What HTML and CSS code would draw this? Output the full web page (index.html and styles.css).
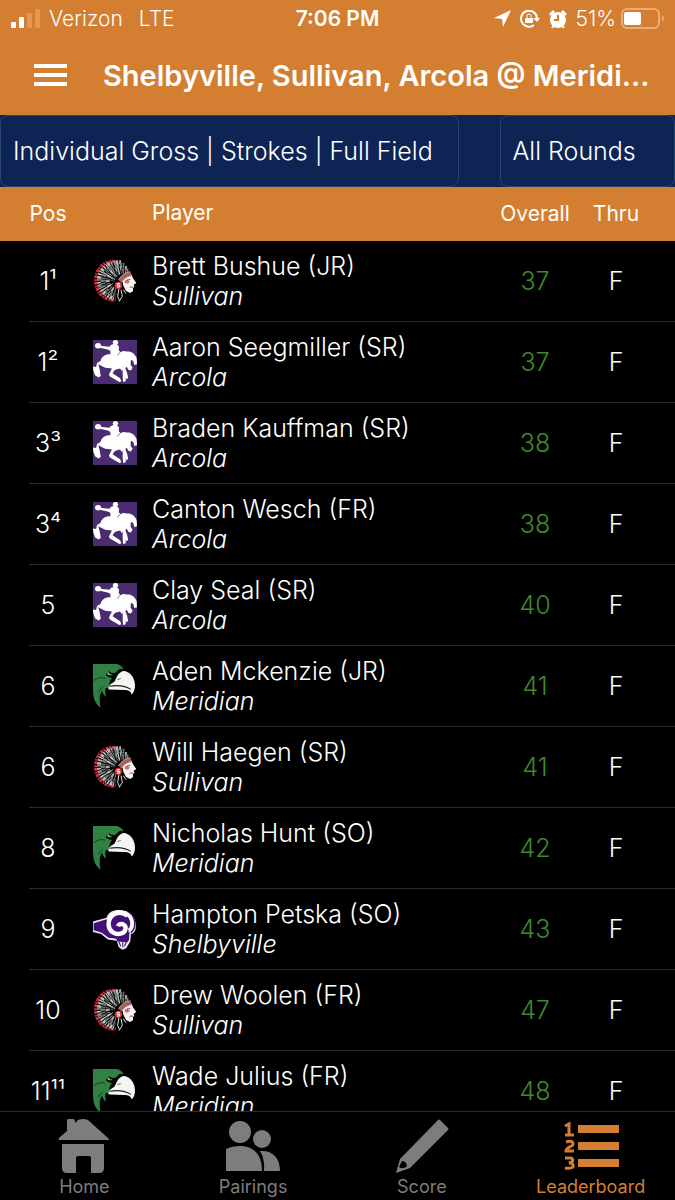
FILE: index.html
```html
<!DOCTYPE html>
<html lang="en">
<head>
    <meta charset="UTF-8">
    <meta name="viewport" content="width=device-width, initial-scale=1.0">
    <title>Leaderboard</title>
    <link rel="stylesheet" href="styles.css">
</head>

<body>
<!-- TEAM LOGOS -->
<svg class="sprites" aria-hidden="true">
    <symbol id="sullivan" viewBox="26 24 132 132">
        <g fill="none">
            <path d="M92 32 C58 28 34 56 34 88 C34 122 56 146 92 148" stroke="#c5303a" stroke-width="10" stroke-dasharray="9 3 5 2"/>
            <path d="M110 34 C72 32 46 54 44 86 C43 112 62 136 94 144" stroke="#b9bfbc" stroke-width="12" stroke-dasharray="5 3 8 2 3 4"/>
            <path d="M120 42 C82 38 58 60 56 88 C56 110 70 126 94 132" stroke="#747b79" stroke-width="13" stroke-dasharray="4 2 7 3"/>
            <path d="M128 52 C94 48 72 66 70 88 C70 104 80 114 94 118" stroke="#a7adaa" stroke-width="13" stroke-dasharray="6 4 3 2"/>
            <path d="M132 60 C106 58 88 70 84 92" stroke="#747b79" stroke-width="14" stroke-dasharray="5 2 3 3"/>
            <path d="M52 48l44 34M38 72l54 18M42 106l48-10M60 132l34-32M82 32l20 44M116 38l-8 34M90 148l14-38" stroke="#111" stroke-width="2"/>
            <path d="M64 40l30 36M46 60l40 22M48 120l38-22M98 36l8 34" stroke="#e8eae8" stroke-width="2"/>
        </g>
        <path d="M112 78L141 70L146 82L156 96L148 101L150 107L146 111L146 121L137 126L125 120L117 104Z" fill="#f5f3f0"/>
        <path d="M102 86Q118 64 138 62L143 74Q123 78 111 94Z" fill="#a5625c"/>
        <path d="M102 86Q118 64 138 62M111 94Q123 78 143 74" fill="none" stroke="#ddd" stroke-width="2"/>
        <path d="M121 88l9-2 7 6-7 6-9-2z" fill="#dc6b70"/>
        <path d="M128 87l10-2M136 109l10-1" stroke="#222" stroke-width="2"/>
        <path d="M104 112l-4 24 6 14M110 116l4 20-10 16M117 116l8 12" fill="none" stroke="#ddd" stroke-width="3"/>
        <circle cx="102" cy="103" r="11" fill="#d6333e"/>
        <path d="M107 98h-8v5h7v5h-8" fill="none" stroke="#fff" stroke-width="3"/>
    </symbol>
    <symbol id="arcola" viewBox="0 0 130 130">
        <path d="M0 0h130v130H0z" fill="#4b2c70"/>
        <g fill="#fff">
            <ellipse cx="15" cy="17" rx="9" ry="8"/>
            <path d="M20 17L48 20L54 14L61 12L58 8L61 1L71 0L75 8L71 13L77 18L76 30L83 38L78 48L52 48L51 32L43 28L20 23Z"/>
            <path d="M22 62C26 48 36 41 52 42L74 44C80 34 90 30 99 34C112 32 124 40 129 54L130 72L122 74L119 62L112 58L111 73L117 82L112 90L104 88L100 79L94 84L97 122L89 124L86 92L80 84L66 88L58 98L80 113L84 122L78 124L50 108L47 102L56 84L36 82L24 76L16 72L20 88L23 106L16 111L6 104L1 90L0 78L9 80L12 68Z"/>
            <path d="M78 76L92 74L101 98L104 112L98 116Z"/>
        </g>
        <path d="M61 92l12-5 5 22-17-10z" fill="#4b2c70"/>
        <path d="M76 14l5 18M80 36l-8 10M88 88l-3 22" stroke="#4b2c70" stroke-width="2"/>
    </symbol>
    <symbol id="meridian" viewBox="0 0 130 130">
        <path d="M0 0H70C80 2 86 8 90 14L76 22L58 38L50 52L46 68L44 72L38 70L36 80L38 98L29 86L26 78L20 94L20 112L22 129C10 120 2 106 1 90L0 70Z" fill="#318044"/>
        <path d="M2 50C12 41 24 38 36 42M28 68Q20 74 16 84" fill="none" stroke="#0c2413" stroke-width="2"/>
        <path d="M46 20Q54 29 66 26L80 13L90 18L78 34L62 42L48 40L38 34L40 27L54 34L58 30L48 27Z" fill="#050706"/>
        <path d="M42 26l8 4 2 4-8-2z" fill="#a5c767"/>
        <path d="M90 21C108 22 122 38 124 60C125 74 121 84 114 90C112 80 104 77 92 77L46 75C44 67 48 61 54 58L64 52C70 38 76 24 90 21Z" fill="#f4f4f2"/>
        <path d="M48 66C76 61 98 66 112 75" fill="none" stroke="#222" stroke-width="3"/>
        <path d="M72 46l10-3" stroke="#222" stroke-width="2"/>
    </symbol>
    <symbol id="shelbyville" viewBox="0 0 130 130">
        <path d="M0 43L40 32C46 12 66 6 90 10C116 14 130 38 126 64C124 74 118 78 112 80L110 102L98 122L86 126L76 118L70 100L44 96L24 80L0 74Z" fill="#f0ebf5"/>
        <path d="M2 48L40 36L50 78L68 90L70 94L46 91L26 76L2 69Z" fill="#43107a"/>
        <circle cx="78" cy="52" r="34" fill="#43107a"/>
        <path d="M48 78L108 74L106 98L102 104L72 102L68 92Z" fill="#43107a"/>
        <path d="M100 14C128 26 128 62 112 76" fill="none" stroke="#43107a" stroke-width="5"/>
        <path d="M114 34l8 -4M118 48h8M116 62l7 3" stroke="#43107a" stroke-width="2"/>
        <path d="M102 26C78 6 46 22 46 52C47 72 66 83 82 79C97 75 101 58 90 52C84 48 76 51 74 57" fill="none" stroke="#fff" stroke-width="13"/>
        <path d="M94 18C118 26 122 58 106 70" fill="none" stroke="#fff" stroke-width="11"/>
        <path d="M76 102l6 14M88 102v18M99 102l-6 14" fill="none" stroke="#43107a" stroke-width="3"/>
    </symbol>
</svg>

<div class="app">
    <div class="status-bar">
        <div class="status-left">
            <svg class="signal" viewBox="0 0 30 20" aria-hidden="true">
                <rect x="0" y="13" width="5" height="6" rx="1" fill="#fff"/>
                <rect x="8" y="8" width="5" height="11" rx="1" fill="#fff"/>
                <rect x="16" y="4" width="5" height="15" rx="1" fill="#e09a58"/>
                <rect x="24" y="0" width="5" height="19" rx="1" fill="#e09a58"/>
            </svg>
            <span>Verizon</span>
            <span class="network">LTE</span>
        </div>
        <div class="clock">7:06 PM</div>
        <div class="status-right">
            <svg width="17" height="17" viewBox="0 0 17 17" aria-hidden="true">
                <path d="M17 0L9 17L8 9L0 8Z" fill="#fff"/>
            </svg>
            <svg width="20" height="18" viewBox="0 0 20 18" aria-hidden="true">
                <path d="M14 15A8 8 0 1 1 17 8" fill="none" stroke="#fff" stroke-width="2"/>
                <path d="M13 8h7l-3 4z" fill="#fff"/>
                <rect x="5" y="8" width="8" height="5" rx="1" fill="#fff"/>
                <path d="M7 8V6a2 2 0 0 1 4 0v2" fill="none" stroke="#fff" stroke-width="1"/>
            </svg>
            <svg width="18" height="18" viewBox="0 0 18 18" aria-hidden="true">
                <circle cx="9" cy="10" r="8" fill="#fff"/>
                <path d="M0 4L4 0L6 2L2 6ZM18 4L14 0L12 2L16 6ZM2 18l2-3 2 1-2 2zM16 18l-2-3-2 1 2 2z" fill="#fff"/>
                <path d="M9 5v5H5" fill="none" stroke="#d47e31" stroke-width="2"/>
            </svg>
            <span>51%</span>
            <svg class="battery" width="43" height="21" viewBox="0 0 43 21" aria-hidden="true">
                <rect x="1" y="1" width="37" height="19" rx="5" fill="none" stroke="#eaac75" stroke-width="2"/>
                <rect x="3" y="4" width="17" height="13" rx="2" fill="#fff"/>
                <path d="M41 7q4 3 0 7z" fill="#eaac75"/>
            </svg>
        </div>
    </div>

    <header class="title-bar">
        <button class="menu-button" aria-label="Menu">
            <svg width="33" height="23" viewBox="0 0 33 23" aria-hidden="true">
                <path d="M0 2h33M0 11h33M0 20h33" stroke="#fff" stroke-width="4"/>
            </svg>
        </button>
        <h1>Shelbyville, Sullivan, Arcola @ Meridi...</h1>
    </header>

    <div class="filters">
        <select aria-label="Leaderboard type">
            <option>Individual Gross | Strokes | Full Field</option>
        </select>
        <select aria-label="Round">
            <option>All Rounds</option>
        </select>
    </div>

    <main class="scores">
        <table>
            <thead>
            <tr>
                <th class="pos">Pos</th>
                <th class="logo"></th>
                <th class="player">Player</th>
                <th class="overall">Overall</th>
                <th class="thru">Thru</th>
            </tr>
            </thead>
            <tbody>
            <tr>
                <td class="pos">1¹</td>
                <td class="logo"><svg><use href="#sullivan"/></svg></td>
                <td class="player">Brett Bushue (JR)<em>Sullivan</em></td>
                <td class="overall">37</td>
                <td class="thru">F</td>
            </tr>
            <tr>
                <td class="pos">1²</td>
                <td class="logo"><svg><use href="#arcola"/></svg></td>
                <td class="player">Aaron Seegmiller (SR)<em>Arcola</em></td>
                <td class="overall">37</td>
                <td class="thru">F</td>
            </tr>
            <tr>
                <td class="pos">3³</td>
                <td class="logo"><svg><use href="#arcola"/></svg></td>
                <td class="player">Braden Kauffman (SR)<em>Arcola</em></td>
                <td class="overall">38</td>
                <td class="thru">F</td>
            </tr>
            <tr>
                <td class="pos">3⁴</td>
                <td class="logo"><svg><use href="#arcola"/></svg></td>
                <td class="player">Canton Wesch (FR)<em>Arcola</em></td>
                <td class="overall">38</td>
                <td class="thru">F</td>
            </tr>
            <tr>
                <td class="pos">5</td>
                <td class="logo"><svg><use href="#arcola"/></svg></td>
                <td class="player">Clay Seal (SR)<em>Arcola</em></td>
                <td class="overall">40</td>
                <td class="thru">F</td>
            </tr>
            <tr>
                <td class="pos">6</td>
                <td class="logo"><svg><use href="#meridian"/></svg></td>
                <td class="player">Aden Mckenzie (JR)<em>Meridian</em></td>
                <td class="overall">41</td>
                <td class="thru">F</td>
            </tr>
            <tr>
                <td class="pos">6</td>
                <td class="logo"><svg><use href="#sullivan"/></svg></td>
                <td class="player">Will Haegen (SR)<em>Sullivan</em></td>
                <td class="overall">41</td>
                <td class="thru">F</td>
            </tr>
            <tr>
                <td class="pos">8</td>
                <td class="logo"><svg><use href="#meridian"/></svg></td>
                <td class="player">Nicholas Hunt (SO)<em>Meridian</em></td>
                <td class="overall">42</td>
                <td class="thru">F</td>
            </tr>
            <tr>
                <td class="pos">9</td>
                <td class="logo"><svg><use href="#shelbyville"/></svg></td>
                <td class="player">Hampton Petska (SO)<em>Shelbyville</em></td>
                <td class="overall">43</td>
                <td class="thru">F</td>
            </tr>
            <tr>
                <td class="pos">10</td>
                <td class="logo"><svg><use href="#sullivan"/></svg></td>
                <td class="player">Drew Woolen (FR)<em>Sullivan</em></td>
                <td class="overall">47</td>
                <td class="thru">F</td>
            </tr>
            <tr>
                <td class="pos">11¹¹</td>
                <td class="logo"><svg><use href="#meridian"/></svg></td>
                <td class="player">Wade Julius (FR)<em>Meridian</em></td>
                <td class="overall">48</td>
                <td class="thru">F</td>
            </tr>
            </tbody>
        </table>
    </main>

    <nav class="tabs">
        <a href="#home">
            <svg viewBox="0 0 54 54" aria-hidden="true">
                <path d="M2 21Q1 20 3 18L10 12V1Q10 0 12 0H16Q18 0 18 2V4L21 1Q26-1 31 1L51 19Q53 21 51 21ZM5 25H47V49Q47 54 42 54H34V39Q34 37 32 37H21Q19 37 19 39V54H10Q5 54 5 49Z"/>
            </svg>
            Home
        </a>
        <a href="#pairings">
            <svg viewBox="0 0 54 54" aria-hidden="true">
                <circle cx="14" cy="13" r="11"/>
                <circle cx="36" cy="20" r="9"/>
                <path d="M0 52V30Q6 27 14 27C28 27 36 36 36 52ZM34 32C46 31 54 38 54 52H38Q39 40 34 32Z"/>
            </svg>
            Pairings
        </a>
        <a href="#score">
            <svg viewBox="0 0 54 54" aria-hidden="true">
                <path d="M43 1Q44 0 45 1L53 9Q54 10 53 11L15 49L1 54L5 40ZM7 42L4 48Q8 51 12 47Q11 42 7 42Z" fill-rule="evenodd"/>
            </svg>
            Score
        </a>
        <a href="#leaderboard" class="active">
            <svg class="list-icon" viewBox="0 0 56 54" aria-hidden="true">
                <path d="M15 6h41v8H15zM15 23h41v8H15zM15 40h41v8H15z"/>
                <path d="M2 7l4-2v11M2 16h9M3 23q7-2 7 2c0 3-7 3-7 7h8M2 39h6q3 1 1 4l-3 1q5 0 4 4-2 2-8 1" fill="none" stroke="currentColor" stroke-width="3"/>
            </svg>
            Leaderboard
        </a>
    </nav>
</div>
</body>
</html>
```
FILE: styles.css
```css
* {
    box-sizing: border-box;
}

body {
    margin: 0;
    background: #000;
    color: #fff;
    font-family: Inter, "Liberation Sans", sans-serif;
    font-size: 25px;
    font-weight: 300;
}

.sprites {
    position: absolute;
    width: 0;
    height: 0;
}

.app {
    display: flex;
    flex-direction: column;
    height: 100vh;
}

.status-bar {
    display: grid;
    grid-template-columns: 1fr auto 1fr;
    align-items: center;
    height: 37px;
    padding: 0 11px;
    background: #d47e31;
    font-size: 21px;
}

.status-left,
.status-right {
    display: flex;
    align-items: center;
}

.signal {
    width: 30px;
    height: 20px;
    margin-right: 8px;
}

.network {
    margin-left: 16px;
}

.clock {
    font-weight: 600;
}

.status-right {
    justify-content: flex-end;
    gap: 9px;
}

.battery {
    margin-left: -4px;
}

.title-bar {
    display: flex;
    align-items: center;
    height: 78px;
    padding: 0 20px 2px 34px;
    background: #d47e31;
}

.menu-button {
    display: flex;
    margin-right: 36px;
    padding: 0;
    border: 0;
    background: none;
}

.title-bar h1 {
    margin: 0;
    overflow: hidden;
    font-size: 29px;
    font-weight: 600;
    white-space: nowrap;
}

.filters {
    display: grid;
    grid-template-columns: 68% 26%;
    justify-content: space-between;
    height: 72px;
    background: #0d2455;
}

.filters select {
    appearance: none;
    min-width: 0;
    padding: 0 12px;
    border: 1px solid #2c4470;
    border-radius: 8px;
    background: #0d2455;
    color: #fff;
    font: inherit;
}

.scores {
    flex: 1;
    min-height: 0;
    overflow-y: auto;
    scrollbar-width: none;
}

table {
    width: 100%;
    border-spacing: 0;
    table-layout: fixed;
}

thead tr {
    height: 54px;
    background: #d47e31;
}

th {
    font-size: 21px;
    font-weight: 400;
}

/* divider starts after the left gutter */
tbody tr {
    height: 81px;
    background: linear-gradient(#2c2c2e, #2c2c2e) right bottom / calc(100% - 29px) 1px no-repeat;
}

th,
td {
    padding: 0 0 2px;
    text-align: center;
}

.pos {
    width: 93px;
    padding-right: 26px;
    padding-left: 29px;
    white-space: nowrap;
}

.logo {
    width: 59px;
    text-align: left;
}

.logo svg {
    display: block;
    width: 44px;
    height: 44px;
}

.player {
    text-align: left;
    line-height: 30px;
}

.player em {
    display: block;
}

.overall {
    width: 100px;
}

td.overall {
    color: #3f8a2b;
}

.thru {
    width: 90px;
    padding-right: 28px;
}

.tabs {
    display: flex;
    height: 89px;
    border-top: 1px solid #2c2c2e;
}

.tabs a {
    display: flex;
    flex: 1;
    flex-direction: column;
    align-items: center;
    padding-top: 7px;
    color: #7d7d7d;
    font-size: 18px;
    font-weight: 400;
    line-height: 28px;
    text-decoration: none;
}

.tabs svg {
    flex-shrink: 0;
    width: 54px;
    height: 54px;
    fill: currentColor;
}

.tabs .list-icon {
    width: 56px;
}

.tabs .active {
    color: #d47e31;
}
```
